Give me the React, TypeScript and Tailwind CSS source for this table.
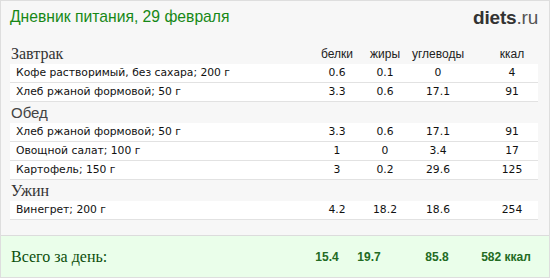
const meals = [
  {
    title: 'Завтрак',
    serif: true,
    items: [
      { name: 'Кофе растворимый, без сахара; 200 г', p: '0.6', f: '0.1', c: '0', kcal: '4' },
      { name: 'Хлеб ржаной формовой; 50 г', p: '3.3', f: '0.6', c: '17.1', kcal: '91' },
    ],
  },
  {
    title: 'Обед',
    serif: false,
    items: [
      { name: 'Хлеб ржаной формовой; 50 г', p: '3.3', f: '0.6', c: '17.1', kcal: '91' },
      { name: 'Овощной салат; 100 г', p: '1', f: '0', c: '3.4', kcal: '17' },
      { name: 'Картофель; 150 г', p: '3', f: '0.2', c: '29.6', kcal: '125' },
    ],
  },
  {
    title: 'Ужин',
    serif: true,
    items: [{ name: 'Винегрет; 200 г', p: '4.2', f: '18.2', c: '18.6', kcal: '254' }],
  },
];

const rowGrid = 'grid grid-cols-[1fr_50px_46px_60px_70px] items-center';

export default function App() {
  return (
    <div className="w-[550px] h-[278px] border border-[#dedede] bg-[#f7f7f7] flex flex-col overflow-hidden">
      {/* Header */}
      <div className="flex items-start justify-between pl-[9px] pr-[11px] pt-[6px] h-[42px]">
        <h1 className="font-['Liberation_Sans',Arial,sans-serif] text-[15.7px] leading-[20px] text-[#168816]">
          Дневник питания, 29 февраля
        </h1>
        <div className="font-['Liberation_Sans',Arial,sans-serif] text-[19px] leading-[20px] pt-[1px] tracking-[-0.2px]">
          <span className="font-bold text-[#333]">diets</span>
          <span className="text-[#555]">.ru</span>
        </div>
      </div>

      {/* Meals */}
      <div className="pl-[9px] pr-[11px] flex flex-col">
        {meals.map((meal, i) => (
          <div key={meal.title} className="flex flex-col">
            <div className={`${rowGrid} h-[21px] pt-[1px]`}>
              <div
                className={
                  meal.serif
                    ? "font-['Liberation_Serif','Times_New_Roman',serif] text-[16px] leading-[20px] text-[#333] pl-[1px]"
                    : "font-['Liberation_Sans',Arial,sans-serif] text-[15px] leading-[20px] text-[#444] pl-[1px]"
                }
              >
                {meal.title}
              </div>
              {i === 0 &&
                ['белки', 'жиры', 'углеводы', 'ккал'].map((h, j) => (
                  <div
                    key={h}
                    className={`font-['Liberation_Sans',Arial,sans-serif] text-[12px] leading-[20px] text-[#222] text-center ${
                      j === 3 ? 'pl-[18px]' : ''
                    }`}
                  >
                    {h}
                  </div>
                ))}
            </div>
            {meal.items.map((it) => (
              <div
                key={it.name}
                className={`${rowGrid} h-[19px] bg-white border-b border-[#e2e2e2] font-['DejaVu_Sans',Verdana,sans-serif] text-[10.75px] text-[#111]`}
              >
                <div className="pl-[6px]">{it.name}</div>
                <div className="text-center">{it.p}</div>
                <div className="text-center">{it.f}</div>
                <div className="text-center">{it.c}</div>
                <div className="text-center pl-[18px]">{it.kcal}</div>
              </div>
            ))}
          </div>
        ))}
      </div>

      <div className="flex-1" />

      {/* Totals */}
      <div className="h-[42px] border-t border-[#dcdcdc] bg-[#eafeea] flex items-center pl-[9px] pr-[17px]">
        <div className="flex-1 font-['Liberation_Serif','Times_New_Roman',serif] text-[16px] text-[#0c4f0c] pl-[1px]">
          Всего за день:
        </div>
        <div className="flex items-center font-['Liberation_Sans',Arial,sans-serif] font-bold text-[12px] text-[#236b23]">
          <div className="w-[40px] text-center">15.4</div>
          <div className="w-[44px] text-center">19.7</div>
          <div className="w-[60px] ml-[16px] text-center">85.8</div>
          <div className="w-[52px] ml-[13px] text-center">582 ккал</div>
        </div>
      </div>
    </div>
  );
}
